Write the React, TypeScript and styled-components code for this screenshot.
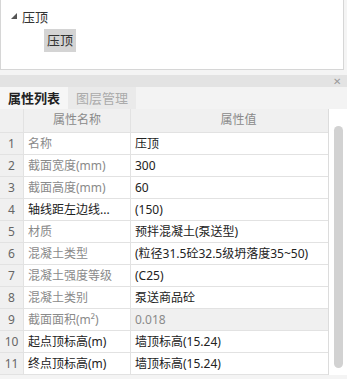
import React from "react"
import styled, { createGlobalStyle } from "styled-components"

const Global = createGlobalStyle`
  body {
    margin: 0;
    background: #f4f4f4;
    font-family: "Noto Sans", "Noto Sans CJK SC", sans-serif;
    font-size: 12px;
    color: #222;
  }
`

const Page = styled.div`
  width: 347px;
  height: 379px;
  overflow: hidden;
`

const TreePanel = styled.div`
  width: 344px;
  height: 70px;
  background: #fff;
  border: 1px solid #d6d6d6;
  border-top: none;
  padding: 7px 0 0 10px;
  box-sizing: border-box;
`

const TreeNode = styled.div`
  display: flex;
  align-items: center;
  gap: 5px;
  height: 18px;
  font-size: 13px;
  color: #333;
`

const TreeChild = styled.div`
  margin: 4px 0 0 33px;
  display: inline-block;
  padding: 0 3px;
  height: 23px;
  line-height: 23px;
  background: #d4d4d4;
  font-size: 13px;
  color: #333;
`

const Panel = styled.div`
  margin-top: 5px;
  background: #f2f2f2;
`

const TitleBar = styled.div`
  height: 12px;
  background: #e3e3e3;
  display: flex;
  justify-content: flex-end;
  align-items: center;
  padding-right: 6px;
  color: #9a9a9a;
  font-size: 10px;
`

const Tabs = styled.div`
  display: flex;
  height: 22px;
  background: #f3f3f3;
`

const Tab = styled.div<{ $active?: boolean }>`
  padding: 0 8px;
  line-height: 22px;
  font-size: 13px;
  background: ${p => (p.$active ? "#f6f6f6" : "#eaeaea")};
  color: ${p => (p.$active ? "#222" : "#ababab")};
  font-weight: ${p => (p.$active ? 600 : 400)};
`

const Body = styled.div`
  display: flex;
  background: #fff;
`

const Table = styled.div`
  width: 329px;
  border-right: 1px solid #dcdcdc;
  box-sizing: border-box;
`

const Row = styled.div<{ $header?: boolean }>`
  display: grid;
  grid-template-columns: 23px 107px 1fr;
  height: ${p => (p.$header ? 24 : 22)}px;
  box-sizing: border-box;
  border-bottom: 1px solid #e2e2e2;
  background: ${p => (p.$header ? "#f0f0f0" : "#fff")};
`

const Cell = styled.div<{ $muted?: boolean; $shade?: boolean; $center?: boolean; $shift?: number }>`
  line-height: 21px;
  padding-left: ${p => (p.$center ? p.$shift ?? 0 : 4)}px;
  text-align: ${p => (p.$center ? "center" : "left")};
  white-space: nowrap;
  overflow: hidden;
  border-left: 1px solid #e2e2e2;
  color: ${p => (p.$muted ? "#8a8a8a" : "#222")};
  background: ${p => (p.$shade ? "#f0f0f0" : "transparent")};
`

const Index = styled.div`
  line-height: 21px;
  text-align: center;
  background: #f0f0f0;
  color: #666;
  font-size: 12px;
`

const ScrollTrack = styled.div`
  flex: 1;
  position: relative;
  background: #fff;
`

const Thumb = styled.div`
  position: absolute;
  left: 5px;
  top: 17px;
  width: 9px;
  height: 242px;
  border-radius: 5px;
  background: #d2d2d2;
`

type Prop = { name: string; value: string; nameMuted?: boolean; valueMuted?: boolean; shade?: boolean }

const props: Prop[] = [
  { name: "名称", value: "压顶", nameMuted: true },
  { name: "截面宽度(mm)", value: "300", nameMuted: true },
  { name: "截面高度(mm)", value: "60", nameMuted: true },
  { name: "轴线距左边线...", value: "(150)" },
  { name: "材质", value: "预拌混凝土(泵送型)", nameMuted: true },
  { name: "混凝土类型", value: "(粒径31.5砼32.5级坍落度35~50)", nameMuted: true },
  { name: "混凝土强度等级", value: "(C25)", nameMuted: true },
  { name: "混凝土类别", value: "泵送商品砼", nameMuted: true },
  { name: "截面面积(m²)", value: "0.018", nameMuted: true, valueMuted: true, shade: true },
  { name: "起点顶标高(m)", value: "墙顶标高(15.24)" },
  { name: "终点顶标高(m)", value: "墙顶标高(15.24)" },
]

const Caret = () => (
  <svg width="6" height="6" viewBox="0 0 6 6">
    <polygon points="6,0 6,6 0,6" fill="#555" />
  </svg>
)

const App = () => {
  return (
    <Page>
      <Global />
      <TreePanel>
        <TreeNode>
          <Caret />
          <span>压顶</span>
        </TreeNode>
        <TreeChild>压顶</TreeChild>
      </TreePanel>
      <Panel>
        <TitleBar>✕</TitleBar>
        <Tabs>
          <Tab $active>属性列表</Tab>
          <Tab>图层管理</Tab>
        </Tabs>
        <Body>
          <Table>
            <Row $header>
              <Index />
              <Cell $center $muted>属性名称</Cell>
              <Cell $center $muted $shift={18}>属性值</Cell>
            </Row>
            {props.map((p, i) => (
              <Row key={i}>
                <Index>{i + 1}</Index>
                <Cell $muted={p.nameMuted}>{p.name}</Cell>
                <Cell $muted={p.valueMuted} $shade={p.shade}>{p.value}</Cell>
              </Row>
            ))}
          </Table>
          <ScrollTrack>
            <Thumb />
          </ScrollTrack>
        </Body>
      </Panel>
    </Page>
  )
}

export default App
